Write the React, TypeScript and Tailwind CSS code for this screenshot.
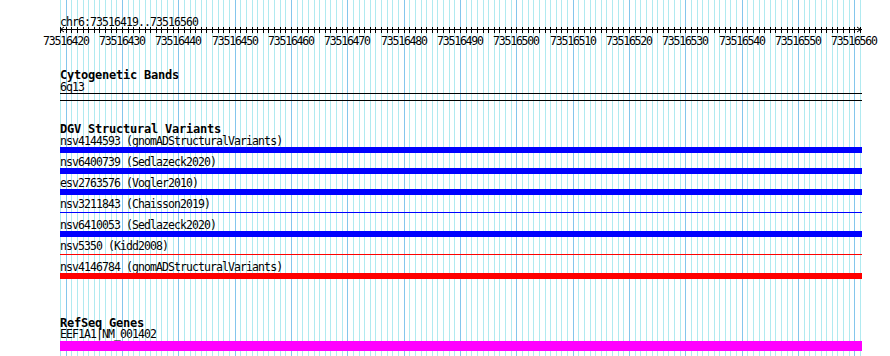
import React from "react";

const START = 73516419;
const END = 73516560;
const BP = END - START + 1;
const LEFT = 60;
const SPAN = 800;
const xAt = (i: number) => Math.round(LEFT + (i * SPAN) / BP);

const mono = "font-['DejaVu_Sans_Mono',monospace] text-[11.5px] tracking-[-0.92px] text-black";
const bold = "font-['DejaVu_Sans_Mono',monospace] font-bold text-[12px] tracking-[-0.22px] text-black leading-[12px] h-[12px] whitespace-pre";

type Feature = { name: string; color: "blue" | "red"; thin?: boolean };

const variants: Feature[] = [
  { name: "nsv4144593 (gnomADStructuralVariants)", color: "blue" },
  { name: "nsv6400739 (Sedlazeck2020)", color: "blue" },
  { name: "esv2763576 (Vogler2010)", color: "blue" },
  { name: "nsv3211843 (Chaisson2019)", color: "blue", thin: true },
  { name: "nsv6410053 (Sedlazeck2020)", color: "blue" },
  { name: "nsv5350 (Kidd2008)", color: "red", thin: true },
  { name: "nsv4146784 (gnomADStructuralVariants)", color: "red" },
];

function Grid() {
  const lines = [];
  for (let i = 0; i <= BP; i++) {
    const major = (START + i) % 10 === 0;
    lines.push(
      <rect key={i} x={xAt(i)} y={0} width={1} height={356} fill={major ? "#84c6ec" : "#b0eaf0"} />
    );
  }
  return (
    <svg className="absolute left-0 top-0" width={890} height={356} shapeRendering="crispEdges">
      {lines}
    </svg>
  );
}

function Ruler() {
  const ticks = [];
  const labels = [];
  for (let i = 0; i <= BP; i++) {
    const x = xAt(i) - LEFT;
    ticks.push(<rect key={i} x={x} y={0} width={1} height={6} fill="#000" />);
    if ((START + i) % 10 === 0) {
      labels.push(
        <text key={i} x={x - 23} y={18} textLength={47} lengthAdjust="spacing">
          {START + i}
        </text>
      );
    }
  }
  return (
    <svg width={830} height={20} className="block overflow-visible">
      <g shapeRendering="crispEdges">
        <rect x={0} y={2} width={802} height={1} fill="#000" />
        {ticks}
      </g>
      <polyline points="4,0 0.5,2.5 4,5" fill="none" stroke="#000" strokeWidth={1} />
      <polyline points="797,0 800.5,2.5 797,5" fill="none" stroke="#000" strokeWidth={1} />
      <g className="font-['DejaVu_Sans_Mono',monospace] text-[11.5px] fill-black">
        {labels}
      </g>
    </svg>
  );
}

function VariantRow({ f }: { f: Feature }) {
  const bg = f.color === "blue" ? "bg-[#0000ff]" : "bg-[#ff0000]";
  return (
    <div className="flex flex-col mb-[4px] last:mb-0">
      <div className={`${mono} leading-[11px] h-[11px] whitespace-pre`}>{f.name}</div>
      <div className="h-[6px] w-[802px] flex flex-col">
        {f.thin ? (
          <div className={`mt-[2px] h-px w-[802px] ${bg}`} />
        ) : (
          <div className={`h-[6px] w-[802px] ${bg}`} />
        )}
      </div>
    </div>
  );
}

export default function App() {
  return (
    <div className="relative w-[890px] h-[356px] overflow-hidden bg-white">
      <Grid />
      <div className="relative flex flex-col pl-[60px]">
        <div className={`${mono} mt-[17px] leading-[10px] h-[10px] whitespace-pre`}>chr6:73516419..73516560</div>
        <Ruler />

        <div className={`${bold} mt-[22px]`}>Cytogenetic Bands</div>
        <div className={`${mono} leading-[12px] h-[12px]`}>6q13</div>
        <div className="h-px w-[802px] bg-black" />
        <div className="mt-[6px] h-px w-[802px] bg-black" />

        <div className={`${bold} mt-[22px]`}>DGV Structural Variants</div>
        <div className="flex flex-col mt-px">
          {variants.map((f) => (
            <VariantRow key={f.name} f={f} />
          ))}
        </div>

        <div className={`${bold} mt-[38px]`}>RefSeq Genes</div>
        <div className={`${mono} relative z-10 leading-[10px] h-[12px] whitespace-pre`}>EEF1A1|NM_001402</div>
        <div className="h-[10px] w-[802px] bg-[#ff00ff]" />
      </div>
    </div>
  );
}
